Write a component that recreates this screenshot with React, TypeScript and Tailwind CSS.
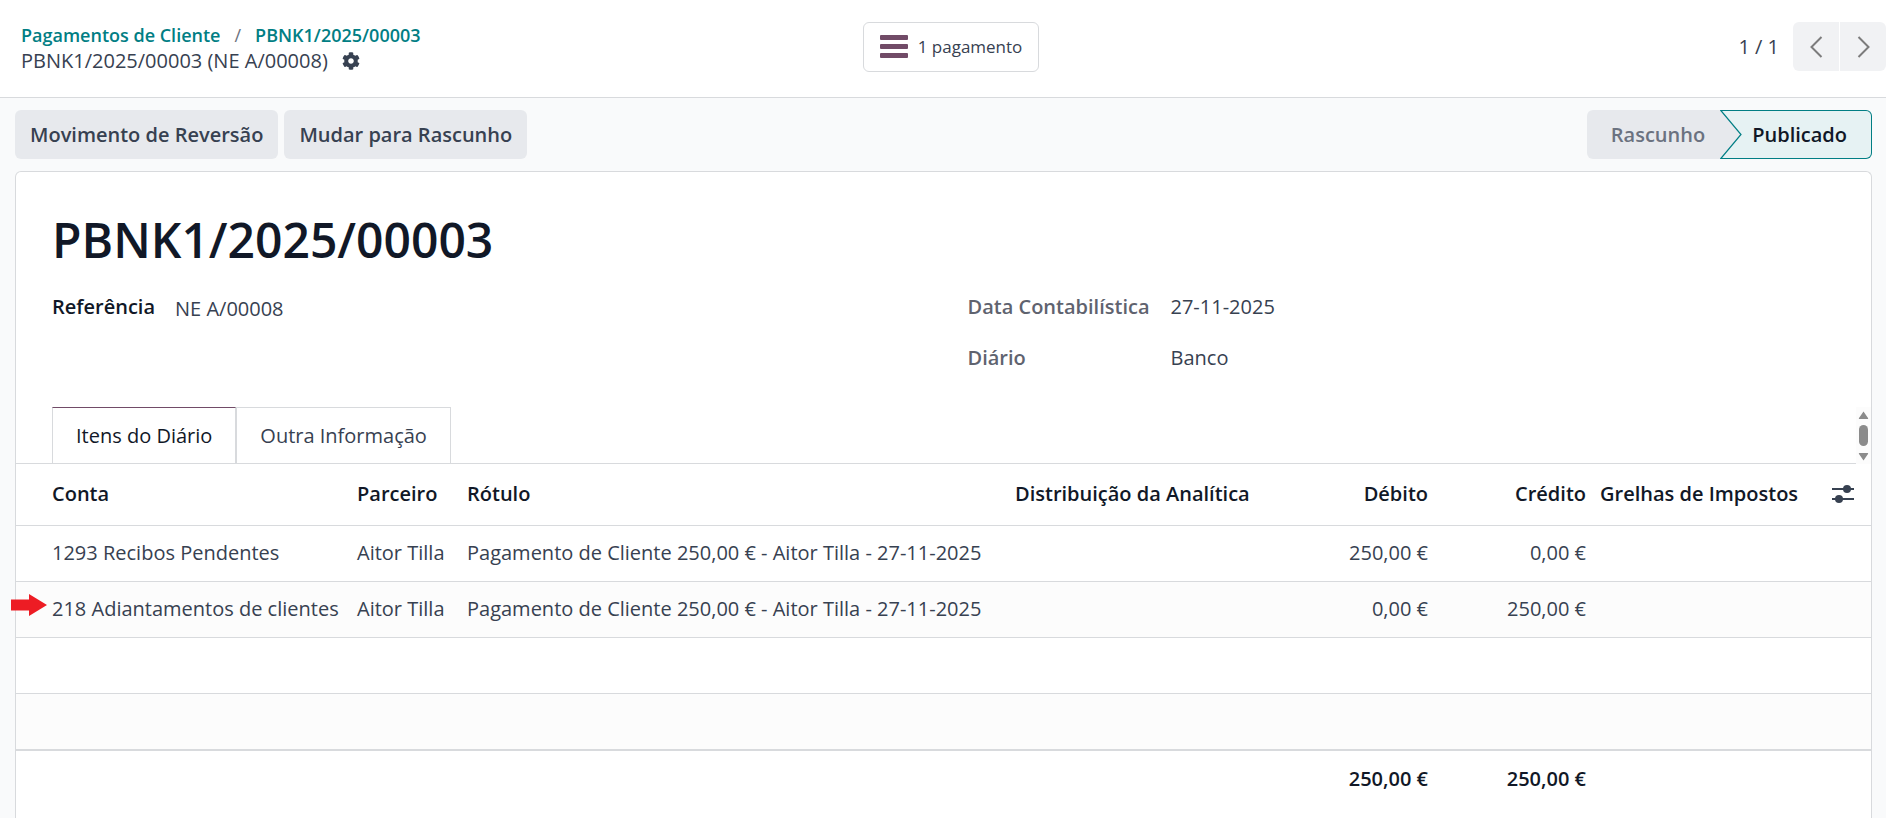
import clsx from "clsx";
import { FaCog } from "react-icons/fa";

type Item = {
  account: string;
  partner: string;
  label: string;
  debit: string;
  credit: string;
  flagged?: boolean;
};

const items: Item[] = [
  {
    account: "1293 Recibos Pendentes",
    partner: "Aitor Tilla",
    label: "Pagamento de Cliente 250,00 € - Aitor Tilla - 27-11-2025",
    debit: "250,00 €",
    credit: "0,00 €",
  },
  {
    account: "218 Adiantamentos de clientes",
    partner: "Aitor Tilla",
    label: "Pagamento de Cliente 250,00 € - Aitor Tilla - 27-11-2025",
    debit: "0,00 €",
    credit: "250,00 €",
    flagged: true,
  },
];

function Chevron({ d }: { d: string }) {
  return (
    <svg className="h-[22px] w-[13px]" viewBox="0 0 13 22" fill="none" stroke="#7c7c7c" strokeWidth="2">
      <path d={d} />
    </svg>
  );
}

function Header() {
  return (
    <header className="grid h-[98px] grid-cols-[1fr_auto_1fr] items-start border-b border-[#d8dadd] bg-white pt-[22px]">
      <nav className="pl-[21px] leading-[26px]">
        <div className="flex gap-3.5 text-lg leading-[26px] font-semibold text-[#017e84]">
          <a href="#pagamentos">Pagamentos de Cliente</a>
          <span className="font-normal text-[#6b7280]">/</span>
          <a href="#pbnk1">PBNK1/2025/00003</a>
        </div>
        <div className="flex items-center gap-3.5">
          <span>PBNK1/2025/00003 (NE A/00008)</span>
          <button type="button" aria-label="Ações">
            <FaCog className="size-[18px]" />
          </button>
        </div>
      </nav>

      <button
        type="button"
        className="ml-4 flex h-[50px] items-center gap-2.5 rounded-md border border-[#d8dadd] px-4 text-[17px]"
      >
        <svg className="h-6 w-7 text-[#714b67]" viewBox="0 0 28 24" fill="currentColor">
          <rect y="0" width="28" height="5" rx="1" />
          <rect y="9" width="28" height="5" rx="1" />
          <rect y="18" width="28" height="5" rx="1" />
        </svg>
        1 pagamento
      </button>

      <div className="flex items-center justify-end">
        <span className="mr-3.5">1 / 1</span>
        <div className="flex gap-px">
          <button
            type="button"
            aria-label="Anterior"
            className="flex h-[49px] w-[46px] items-center justify-center rounded-l-md bg-[#f1f2f4]"
          >
            <Chevron d="M11.5 1 1.5 11l10 10" />
          </button>
          <button
            type="button"
            aria-label="Seguinte"
            className="flex h-[49px] w-[46px] items-center justify-center rounded-r-md bg-[#f1f2f4]"
          >
            <Chevron d="m1.5 1 10 10-10 10" />
          </button>
        </div>
      </div>
    </header>
  );
}

function StatusBar() {
  return (
    <div className="flex items-center justify-between py-3 pr-3.5 pl-[15px] font-semibold">
      <div className="flex gap-1.5">
        {["Movimento de Reversão", "Mudar para Rascunho"].map((label) => (
          <button key={label} type="button" className="h-[49px] rounded-md bg-[#e7e9ed] px-[15px]">
            {label}
          </button>
        ))}
      </div>
      <div className="flex">
        <button
          type="button"
          className="h-[49px] rounded-l-md bg-[#e7e9ed] pr-[15px] pl-6 text-[#6b7280]"
        >
          Rascunho
        </button>
        <svg className="h-[49px] w-[22px] bg-[#e6f2f3]" viewBox="0 0 22 49">
          <path d="M0 0 21 24.5 0 49z" fill="#e7e9ed" />
          <path d="M22 .5H.8L21 24.5.8 48.5H22" fill="none" stroke="#017e84" strokeWidth="1.2" />
        </svg>
        <button
          type="button"
          aria-current="step"
          className="h-[49px] rounded-r-md border border-l-0 border-[#017e84] bg-[#e6f2f3] pr-6 pl-2.5 text-[#111827]"
        >
          Publicado
        </button>
      </div>
    </div>
  );
}

function Fields() {
  return (
    <div className="grid grid-cols-2 gap-12 px-9 leading-[27px]">
      <dl className="flex gap-5">
        <dt className="font-semibold text-[#111827]">Referência</dt>
        <dd className="pt-0.5">NE A/00008</dd>
      </dl>
      <dl className="grid grid-cols-[203px_1fr] content-start gap-y-6">
        <dt className="font-semibold text-[#5f636f]">Data Contabilística</dt>
        <dd>27-11-2025</dd>
        <dt className="font-semibold text-[#5f636f]">Diário</dt>
        <dd>Banco</dd>
      </dl>
    </div>
  );
}

function Tabs() {
  return (
    <div className="flex justify-between border-b border-[#d8dadd] pl-9">
      <div role="tablist" className="flex">
        <button
          type="button"
          role="tab"
          aria-selected="true"
          className="h-14 border border-b-0 border-[#d8dadd] border-t-[#714b67] px-[23px] text-[#111827]"
        >
          Itens do Diário
        </button>
        <button
          type="button"
          role="tab"
          aria-selected="false"
          className="h-14 border border-b-0 border-[#d8dadd] px-[23px]"
        >
          Outra Informação
        </button>
      </div>
      <svg className="-mb-px h-[57px] w-[15px] bg-[#fcfcfc]" viewBox="0 0 15 57" fill="#8b8b8b">
        <path d="M7.5 4.5 12 11a.6.6 0 0 1-.5 1h-8a.6.6 0 0 1-.5-1z" />
        <rect x="3" y="18" width="9" height="21" rx="4.5" />
        <path d="M7.5 53.5 12 47a.6.6 0 0 0-.5-1h-8a.6.6 0 0 0-.5 1z" />
      </svg>
    </div>
  );
}

function ItemsTable() {
  return (
    <table className="w-full table-fixed border-collapse text-left whitespace-nowrap">
      <colgroup>
        <col className="w-[334px]" />
        <col className="w-[110px]" />
        <col />
        <col className="w-[282px]" />
        <col className="w-[145px]" />
        <col className="w-[158px]" />
        <col className="w-[217px]" />
        <col className="w-[61px]" />
      </colgroup>
      <thead>
        <tr className="h-[61px] border-b border-[#d8dadd] text-[#111827] *:font-semibold">
          <th className="pl-9">Conta</th>
          <th className="pl-[7px]">Parceiro</th>
          <th className="pl-[7px]">Rótulo</th>
          <th className="pl-[7px]">Distribuição da Analítica</th>
          <th className="pr-[7px] text-right">Débito</th>
          <th className="pr-[7px] text-right">Crédito</th>
          <th className="pl-[7px]">Grelhas de Impostos</th>
          <th className="pl-[22px]">
            <button type="button" aria-label="Colunas" className="block">
              <svg className="h-[18px] w-[22px]" viewBox="0 0 22 18" fill="#374151">
                <rect y="3" width="22" height="2" />
                <rect y="13" width="22" height="2" />
                <circle cx="15" cy="4" r="4" />
                <circle cx="7" cy="14" r="4" />
              </svg>
            </button>
          </th>
        </tr>
      </thead>
      <tbody>
        {items.map((item, i) => (
          <tr
            key={item.account}
            className={clsx("h-14 border-b border-[#d8dadd]", i % 2 === 1 && "bg-[#fcfcfc]")}
          >
            <td className="relative pl-9">
              {item.flagged && (
                <svg
                  className="absolute top-3 -left-[5px] h-[22px] w-9"
                  viewBox="0 0 36 22"
                  fill="#ed1c24"
                >
                  <path d="M0 5.5h18V0l18 11-18 11v-5.5H0z" />
                </svg>
              )}
              {item.account}
            </td>
            <td className="pl-[7px]">{item.partner}</td>
            <td className="pl-[7px]">{item.label}</td>
            <td />
            <td className="pr-[7px] text-right">{item.debit}</td>
            <td className="pr-[7px] text-right">{item.credit}</td>
            <td />
            <td />
          </tr>
        ))}
        <tr className="h-14 border-b border-[#d8dadd]">
          <td colSpan={8} />
        </tr>
        <tr className="h-[57px] border-b-2 border-[#d8dadd] bg-[#fcfcfc]">
          <td colSpan={8} />
        </tr>
      </tbody>
      <tfoot>
        <tr className="h-14 font-semibold text-[#111827]">
          <td colSpan={4} />
          <td className="pr-[7px] text-right">250,00 €</td>
          <td className="pr-[7px] text-right">250,00 €</td>
          <td colSpan={2} />
        </tr>
      </tfoot>
    </table>
  );
}

export default function App() {
  return (
    <div className="flex min-h-screen flex-col bg-[#f9fafb] font-['Open_Sans','Noto_Sans',sans-serif] text-[20px] text-[#374151]">
      <Header />
      <StatusBar />
      <main className="mr-3.5 ml-[15px] flex-1 rounded-t-md border border-b-0 border-[#d8dadd] bg-white">
        <h1 className="px-9 pt-9 text-[48px] leading-[64px] font-semibold text-[#111827]">
          PBNK1/2025/00003
        </h1>
        <div className="pt-[21px] pb-9">
          <Fields />
        </div>
        <Tabs />
        <ItemsTable />
      </main>
    </div>
  );
}
